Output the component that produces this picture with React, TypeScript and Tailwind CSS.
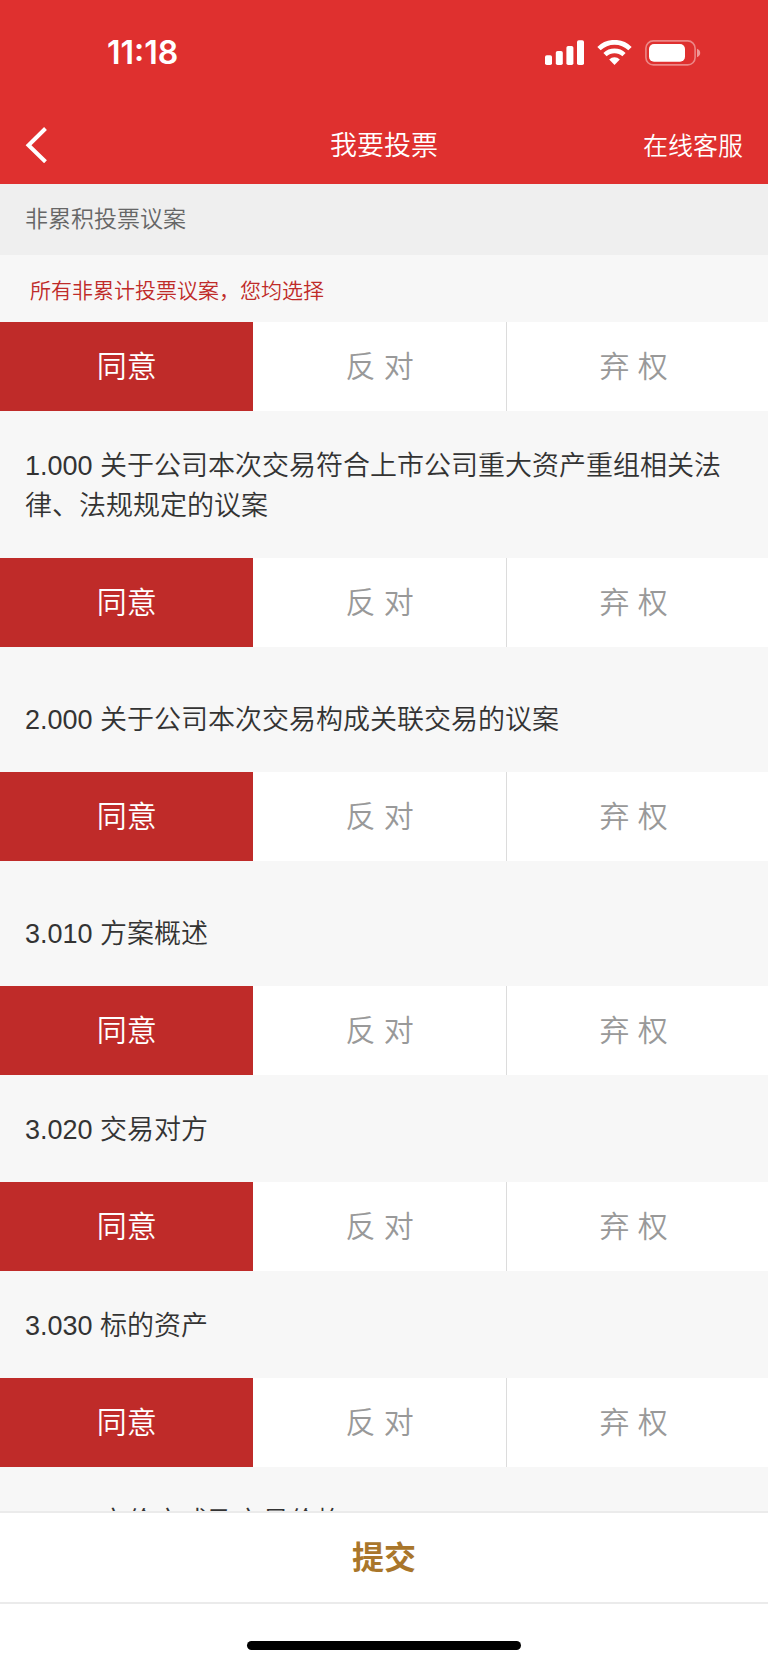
import { useState } from "react";

type Vote = "agree" | "against" | "abstain";

const options: { value: Vote; label: string }[] = [
  { value: "agree", label: "同意" },
  { value: "against", label: "反 对" },
  { value: "abstain", label: "弃 权" },
];

// groupEnd leaves extra room below the row, before the next group
const proposals = [
  { no: "1.000", title: "关于公司本次交易符合上市公司重大资产重组相关法律、法规规定的议案", groupEnd: true },
  { no: "2.000", title: "关于公司本次交易构成关联交易的议案", groupEnd: true },
  { no: "3.010", title: "方案概述", groupEnd: false },
  { no: "3.020", title: "交易对方", groupEnd: false },
  { no: "3.030", title: "标的资产", groupEnd: false },
  { no: "3.040", title: "定价方式及交易价格", groupEnd: false },
];

const StatusBar = () => (
  <div className="flex h-[105px] items-center justify-between pl-[107px] pr-[67px]">
    <span className="font-['Inter',sans-serif] text-[32px] font-semibold leading-none">11:18</span>
    <div className="flex items-center gap-[13px]">
      <svg width="39" height="25" viewBox="0 0 39 25" fill="currentColor" aria-hidden="true">
        <rect x="0" y="15.2" width="7" height="9.8" rx="1.8" />
        <rect x="10.8" y="11" width="7" height="14" rx="1.8" />
        <rect x="21.4" y="6" width="7" height="19" rx="1.8" />
        <rect x="32" y="0.3" width="7" height="24.7" rx="1.8" />
      </svg>
      <svg width="35" height="25" viewBox="0 0 35 25" fill="none" aria-hidden="true">
        <path d="M2 8.6A22.2 22.2 0 0 1 33 8.6" stroke="currentColor" strokeWidth="4.8" />
        <path d="M8 14.7A13.7 13.7 0 0 1 27 14.7" stroke="currentColor" strokeWidth="4.6" />
        <path d="M12.2 19.4a7.7 7.7 0 0 1 10.6 0L17.5 24.9z" fill="currentColor" />
      </svg>
      <svg width="56" height="26" viewBox="0 0 56 26" fill="none" aria-hidden="true">
        <rect x="0.9" y="0.9" width="49.2" height="24" rx="7.4" stroke="currentColor" strokeOpacity="0.42" strokeWidth="1.6" />
        <rect x="4" y="4" width="36" height="17.8" rx="5" fill="currentColor" />
        <path d="M52 8.8c1.9 0.6 3.2 2.2 3.2 4.2s-1.3 3.6-3.2 4.2z" fill="currentColor" fillOpacity="0.5" />
      </svg>
    </div>
  </div>
);

const VoteRow = ({ name, value, onChange }: { name: string; value: Vote | null; onChange: (v: Vote) => void }) => (
  <div role="group" aria-label={name} className="flex h-[89px] bg-white">
    {options.map((option) => (
      <button
        key={option.value}
        type="button"
        aria-pressed={value === option.value}
        onClick={() => onChange(option.value)}
        className={`w-[33%] cursor-pointer text-[30px] leading-none ${
          value === option.value ? "bg-[#bf2b29] text-white" : "text-[#999]"
        } ${option.value === "against" ? "border-r border-[#dcdcdc]" : ""}`}
      >
        {option.label}
      </button>
    ))}
  </div>
);

const App = () => {
  const [votes, setVotes] = useState<Record<string, Vote>>(
    Object.fromEntries(proposals.map((p) => [p.no, "agree" as Vote]))
  );

  const setAll = (vote: Vote) => setVotes(Object.fromEntries(proposals.map((p) => [p.no, vote])));

  const first = votes[proposals[0].no];
  const allVote = proposals.every((p) => votes[p.no] === first) ? first : null;

  return (
    <div
      lang="zh-CN"
      className="flex h-screen flex-col bg-[#f7f7f7] font-['Liberation_Sans','Noto_Sans_CJK_SC',sans-serif] font-[350] text-[#333]"
    >
      <header className="shrink-0 bg-[#df302f] text-white">
        <StatusBar />
        <div className="grid h-[79px] grid-cols-[1fr_auto_1fr] items-center px-[25px]">
          <button type="button" aria-label="返回" className="cursor-pointer justify-self-start">
            <svg width="24" height="36" viewBox="0 0 24 36" fill="none" stroke="currentColor" strokeWidth="4" aria-hidden="true">
              <path d="M20.5 1.5 3.5 18.3 20.5 34.8" />
            </svg>
          </button>
          <h1 className="pt-1 text-[27px] font-[350]">我要投票</h1>
          <a href="#service" className="justify-self-end pt-1 text-[25px]">在线客服</a>
        </div>
      </header>

      <main className="min-h-0 flex-1 overflow-y-auto [scrollbar-width:none]">
        <h2 className="bg-[#efefef] px-[25px] py-5 text-[23px] font-[350] leading-[31px] text-[#666]">非累积投票议案</h2>
        <p className="px-[30px] pb-4 pt-[21px] text-[21px] leading-[30px] text-[#bf2b29]">
          所有非累计投票议案，您均选择
        </p>
        <VoteRow name="全部议案" value={allVote} onChange={setAll} />
        {proposals.map((p) => (
          <section key={p.no} className={p.groupEnd ? "mb-[18px]" : ""}>
            <h3 className="px-[25px] pb-8 pt-[35px] text-[27px] font-[350] leading-[40px]">
              {p.no} {p.title}
            </h3>
            <VoteRow name={p.title} value={votes[p.no]} onChange={(v) => setVotes({ ...votes, [p.no]: v })} />
          </section>
        ))}
      </main>

      <footer className="shrink-0 border-t-2 border-[#ebebeb] bg-white">
        <button
          type="button"
          className="h-[91px] w-full cursor-pointer border-b-2 border-[#ebebeb] text-[32px] font-bold text-[#a9762b]"
        >
          提交
        </button>
        <div className="mx-auto mb-[15px] mt-[37px] h-[9px] w-[274px] rounded-full bg-black" />
      </footer>
    </div>
  );
};

export default App;
